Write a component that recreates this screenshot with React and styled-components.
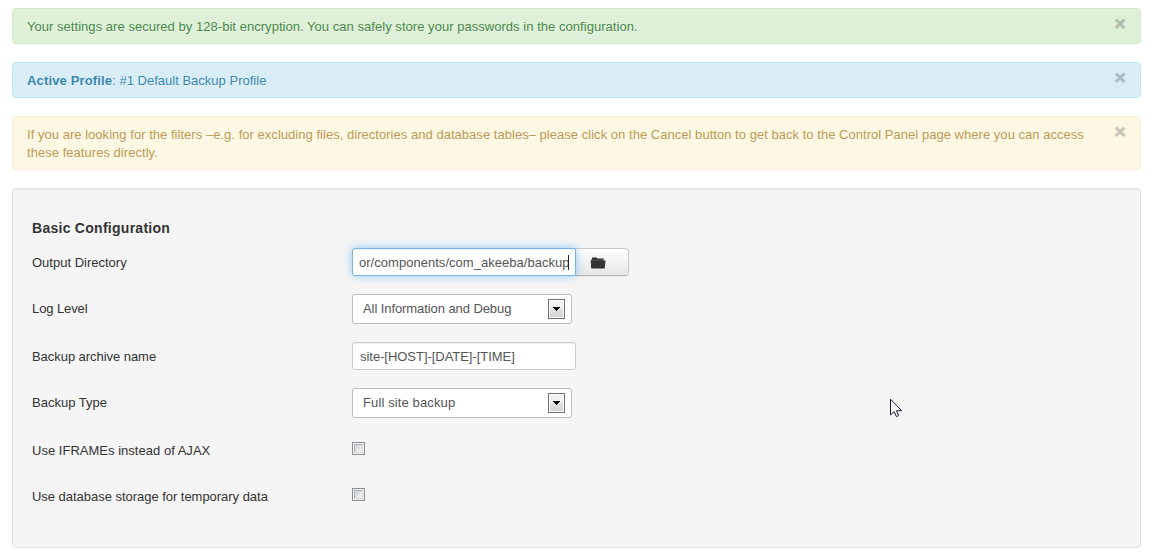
import React from "react";
import styled, { createGlobalStyle } from "styled-components";

const GlobalStyle = createGlobalStyle`
  * { box-sizing: border-box; }
  body {
    margin: 0;
    background: #fff;
    color: #333;
    font: 13px/18px "Liberation Sans", Arial, sans-serif;
    overflow: hidden;
  }
`;

const tones = {
  success: { bg: "#dff0d8", border: "#d6e9c6", text: "#468847" },
  info: { bg: "#d9edf7", border: "#bce8f1", text: "#3a87ad" },
  warning: { bg: "#fcf8e3", border: "#fbeed5", text: "#c09853" },
};

const Page = styled.main`
  padding: 8px 12px 6px;
`;

const AlertBox = styled.div`
  display: flex;
  align-items: flex-start;
  justify-content: space-between;
  margin-bottom: 18px;
  padding: 9px 14px 7px;
  border: 1px solid ${(p) => tones[p.$tone].border};
  border-radius: 4px;
  background: ${(p) => tones[p.$tone].bg};
  color: ${(p) => tones[p.$tone].text};
  text-shadow: 0 1px 0 rgba(255, 255, 255, 0.5);
`;

const Line = styled.span`
  display: block;
  width: fit-content;
  white-space: nowrap;
  letter-spacing: ${(p) => p.$track || 0}px;
`;

const ProfileLabel = styled.strong`
  letter-spacing: 0.15px;
`;

const Close = styled.button`
  flex: none;
  width: 12px;
  height: 18px;
  margin-top: -3px;
  padding: 0;
  border: 0;
  background: transparent;
  color: #000;
  font: bold 19px/18px "Liberation Sans", Arial, sans-serif;
  -webkit-text-stroke: 0.9px #000;
  text-shadow: 0 1px 0 #fff;
  opacity: 0.2;
`;

const Well = styled.section`
  height: 360px;
  padding: 19px;
  border: 1px solid #e3e3e3;
  border-radius: 4px;
  background: #f5f5f5;
  box-shadow: inset 0 1px 1px rgba(0, 0, 0, 0.05);
`;

const Heading = styled.h4`
  margin: 0;
  font-size: 14px;
  line-height: 40px;
`;

const Row = styled.div`
  display: flex;
  align-items: flex-start;
  min-height: 28px;
  margin-bottom: 18px;
`;

const Label = styled.label`
  width: 320px;
  padding-top: 6px;
`;

const Field = styled.div`
  display: flex;
  align-items: center;
  width: 224px;
  height: 28px;
  padding: 2px 7px 0 ${(p) => (p.$focused ? 6 : 7)}px;
  border: 1px solid ${(p) => (p.$focused ? "#74b5ec" : "#ccc")};
  border-radius: ${(p) => (p.$focused ? "3px 0 0 3px" : "3px")};
  background: #fff;
  color: #555;
  box-shadow: inset 0 1px 1px rgba(0, 0, 0, 0.075)
    ${(p) => p.$focused && ", 0 0 8px rgba(82, 168, 236, 0.6)"};
  z-index: ${(p) => (p.$focused ? 1 : 0)};
`;

const Caret = styled.span`
  flex: none;
  width: 1px;
  height: 15px;
  margin: -1px 0 0 -2px;
  background: #222;
`;

const BrowseButton = styled.button`
  display: flex;
  align-items: center;
  width: 54px;
  height: 28px;
  margin-left: -1px;
  padding: 2px 0 0 14px;
  border: 1px solid #c9c9c9;
  border-bottom-color: #b3b3b3;
  border-radius: 0 4px 4px 0;
  background: linear-gradient(#fff, #e6e6e6);
  box-shadow: 0 1px 2px rgba(0, 0, 0, 0.05);
`;

const SelectBox = styled.div`
  display: flex;
  align-items: center;
  justify-content: space-between;
  width: 220px;
  height: 30px;
  padding: 0 6px 0 10px;
  border: 1px solid #bbb;
  border-radius: 3px;
  background: #fff;
  color: #555;
`;

const Arrow = styled.span`
  display: flex;
  align-items: center;
  justify-content: center;
  width: 17px;
  height: 20px;
  border: 1px solid #707070;
  background: linear-gradient(#f2f2f2 0 45%, #e2e2e2 50%, #d2d2d2);
  box-shadow: inset 0 0 0 1px #fafafa;
`;

const Check = styled.span`
  width: 13px;
  height: 13px;
  margin-top: 6px;
  padding: 1px;
  border: 1px solid #8e8f8f;
  background: #f4f4f4;

  &::before {
    content: "";
    display: block;
    box-sizing: border-box;
    height: 9px;
    border: 1px solid;
    border-color: #aeb3b9 #d5d7da #d5d7da #aeb3b9;
    background: linear-gradient(135deg, #cbcfd5, #f6f6f6);
  }
`;

const Pointer = styled.svg`
  position: absolute;
  left: 890px;
  top: 398px;
`;

function Alert({ tone, children }) {
  return (
    <AlertBox $tone={tone}>
      <div>{children}</div>
      <Close aria-label="Close">×</Close>
    </AlertBox>
  );
}

function Select({ children, track }) {
  return (
    <SelectBox>
      <Line $track={track}>{children}</Line>
      <Arrow>
        <svg width="7" height="4" shapeRendering="crispEdges">
          <path d="M0 0h7v1H6v1H5v1H4v1H3V3H2V2H1V1H0z" fill="#000" />
        </svg>
      </Arrow>
    </SelectBox>
  );
}

function FormRow({ label, track, children }) {
  return (
    <Row>
      <Label>
        <Line $track={track}>{label}</Line>
      </Label>
      {children}
    </Row>
  );
}

export default function App() {
  return (
    <Page>
      <GlobalStyle />
      <Alert tone="success">
        <Line $track={0.038}>
          Your settings are secured by 128-bit encryption. You can safely store your passwords in
          the configuration.
        </Line>
      </Alert>
      <Alert tone="info">
        <Line $track={0.01}>
          <ProfileLabel>Active Profile</ProfileLabel>: #1 Default Backup Profile
        </Line>
      </Alert>
      <Alert tone="warning">
        <Line $track={0.033}>
          If you are looking for the filters –e.g. for excluding files, directories and database
          tables– please click on the Cancel button to get back to the Control Panel page where you
          can access
        </Line>
        <Line $track={0.04}>these features directly.</Line>
      </Alert>
      <Well>
        <Heading>
          <Line $track={0.27}>Basic Configuration</Line>
        </Heading>
        <FormRow label="Output Directory">
          <Field $focused>
            <Line $track={0.03}>or/components/com_akeeba/backup</Line>
            <Caret />
          </Field>
          <BrowseButton aria-label="Browse">
            <svg width="16" height="12" viewBox="0 0 16 12">
              <path d="M1 11V2.4H2V.6H7V1.6H13.6V5z" fill="#333" />
              <path d="M.6 3.6H15.6L14.6 11.4H1.4z" fill="#333" />
              <path d="M1 3.5H14" fill="none" stroke="#666" strokeWidth=".6" />
            </svg>
          </BrowseButton>
        </FormRow>
        <FormRow label="Log Level" track={-0.1}>
          <Select track={-0.08}>All Information and Debug</Select>
        </FormRow>
        <FormRow label="Backup archive name" track={-0.05}>
          <Field>
            <Line $track={-0.04}>site-[HOST]-[DATE]-[TIME]</Line>
          </Field>
        </FormRow>
        <FormRow label="Backup Type">
          <Select track={0.12}>Full site backup</Select>
        </FormRow>
        <FormRow label="Use IFRAMEs instead of AJAX" track={0.02}>
          <Check />
        </FormRow>
        <FormRow label="Use database storage for temporary data" track={-0.03}>
          <Check />
        </FormRow>
      </Well>
      <Pointer width="13" height="20" viewBox="0 0 13 20">
        <path
          d="M.5 1.2V17l3.6-3.4 2.3 5 2.2-1-2.2-4.9h5.2z"
          fill="#fff"
          stroke="#1c1c38"
          strokeWidth="1"
        />
      </Pointer>
    </Page>
  );
}
